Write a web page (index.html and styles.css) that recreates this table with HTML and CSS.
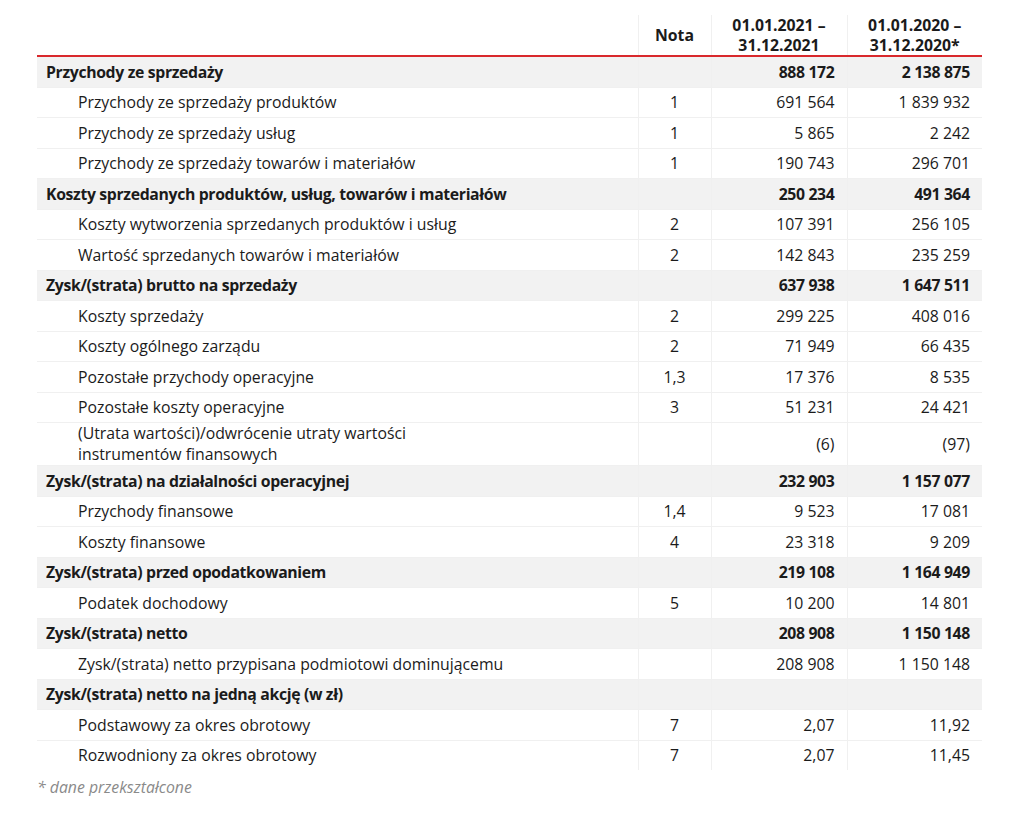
FILE: index.html
```html
<!DOCTYPE html>
<html lang="pl">
<head>
<meta charset="utf-8">
<link rel="stylesheet" href="styles.css">
</head>
<body>
<div class="wrap">
<table class="fin">
  <colgroup>
    <col class="c-name"><col class="c-note"><col class="c-val"><col class="c-val2">
  </colgroup>
  <thead>
    <tr>
      <th class="name"></th>
      <th class="note">Nota</th>
      <th class="val">01.01.2021 –<br>31.12.2021</th>
      <th class="val">01.01.2020 –<br>31.12.2020*</th>
    </tr>
  </thead>
  <tbody>
    <tr class="sum"><td class="name">Przychody ze sprzedaży</td><td class="note"></td><td class="num">888 172</td><td class="num">2 138 875</td></tr>
    <tr><td class="name sub">Przychody ze sprzedaży produktów</td><td class="note">1</td><td class="num">691 564</td><td class="num">1 839 932</td></tr>
    <tr><td class="name sub">Przychody ze sprzedaży usług</td><td class="note">1</td><td class="num">5 865</td><td class="num">2 242</td></tr>
    <tr><td class="name sub">Przychody ze sprzedaży towarów i materiałów</td><td class="note">1</td><td class="num">190 743</td><td class="num">296 701</td></tr>
    <tr class="sum"><td class="name">Koszty sprzedanych produktów, usług, towarów i materiałów</td><td class="note"></td><td class="num">250 234</td><td class="num">491 364</td></tr>
    <tr><td class="name sub">Koszty wytworzenia sprzedanych produktów i usług</td><td class="note">2</td><td class="num">107 391</td><td class="num">256 105</td></tr>
    <tr><td class="name sub">Wartość sprzedanych towarów i materiałów</td><td class="note">2</td><td class="num">142 843</td><td class="num">235 259</td></tr>
    <tr class="sum"><td class="name">Zysk/(strata) brutto na sprzedaży</td><td class="note"></td><td class="num">637 938</td><td class="num">1 647 511</td></tr>
    <tr><td class="name sub">Koszty sprzedaży</td><td class="note">2</td><td class="num">299 225</td><td class="num">408 016</td></tr>
    <tr><td class="name sub">Koszty ogólnego zarządu</td><td class="note">2</td><td class="num">71 949</td><td class="num">66 435</td></tr>
    <tr><td class="name sub">Pozostałe przychody operacyjne</td><td class="note">1,3</td><td class="num">17 376</td><td class="num">8 535</td></tr>
    <tr><td class="name sub">Pozostałe koszty operacyjne</td><td class="note">3</td><td class="num">51 231</td><td class="num">24 421</td></tr>
    <tr class="tall"><td class="name sub">(Utrata wartości)/odwrócenie utraty wartości<br>instrumentów finansowych</td><td class="note"></td><td class="num">(6)</td><td class="num">(97)</td></tr>
    <tr class="sum"><td class="name">Zysk/(strata) na działalności operacyjnej</td><td class="note"></td><td class="num">232 903</td><td class="num">1 157 077</td></tr>
    <tr><td class="name sub">Przychody finansowe</td><td class="note">1,4</td><td class="num">9 523</td><td class="num">17 081</td></tr>
    <tr><td class="name sub">Koszty finansowe</td><td class="note">4</td><td class="num">23 318</td><td class="num">9 209</td></tr>
    <tr class="sum"><td class="name">Zysk/(strata) przed opodatkowaniem</td><td class="note"></td><td class="num">219 108</td><td class="num">1 164 949</td></tr>
    <tr><td class="name sub">Podatek dochodowy</td><td class="note">5</td><td class="num">10 200</td><td class="num">14 801</td></tr>
    <tr class="sum"><td class="name">Zysk/(strata) netto</td><td class="note"></td><td class="num">208 908</td><td class="num">1 150 148</td></tr>
    <tr><td class="name sub">Zysk/(strata) netto przypisana podmiotowi dominującemu</td><td class="note"></td><td class="num">208 908</td><td class="num">1 150 148</td></tr>
    <tr class="sum"><td class="name">Zysk/(strata) netto na jedną akcję (w zł)</td><td class="note"></td><td class="num"></td><td class="num"></td></tr>
    <tr><td class="name sub">Podstawowy za okres obrotowy</td><td class="note">7</td><td class="num">2,07</td><td class="num">11,92</td></tr>
    <tr class="last"><td class="name sub">Rozwodniony za okres obrotowy</td><td class="note">7</td><td class="num">2,07</td><td class="num">11,45</td></tr>
  </tbody>
</table>
<p class="foot">* dane przekształcone</p>
</div>
</body>
</html>
```

FILE: styles.css
```css
html, body {
  margin: 0;
  padding: 0;
  background: #ffffff;
}

body {
  font-family: "Open Sans", "Noto Sans", sans-serif;
  font-size: 15.8px;
  color: #1b1b1b;
}

.wrap {
  padding: 15px 42px 0 37px;
}

.fin {
  width: 945px;
  border-collapse: collapse;
  table-layout: fixed;
}

.c-name { width: 601px; }
.c-note { width: 73px; }
.c-val { width: 136px; }
.c-val2 { width: 135px; }

.fin th {
  height: 39px;
  padding: 0;
  font-weight: 700;
  line-height: 20px;
  text-align: center;
  vertical-align: middle;
  border-bottom: 2px solid #d9282c;
}

.fin th + th {
  border-left: 1px solid #f0f0f0;
}

.fin td {
  height: 29.5px;
  padding: 0;
  line-height: 18px;
  vertical-align: middle;
  border-bottom: 1px solid #f0f0f0;
}

.fin td + td {
  border-left: 1px solid #f0f0f0;
}

.fin tr.tall td {
  height: 42px;
  line-height: 21px;
}

.fin tr.last td {
  border-bottom: none;
}

.fin tr.sum td {
  background: #f2f2f2;
  font-weight: 700;
  letter-spacing: -0.35px;
}

.fin td.name {
  padding-left: 9px;
}

.fin td.name.sub {
  padding-left: 41px;
}

.fin td.note {
  text-align: center;
}

.fin td.num {
  text-align: right;
  padding-right: 12px;
}

.foot {
  margin: 8px 0 0;
  font-style: italic;
  color: #8a8a8a;
  line-height: 18px;
}
```
